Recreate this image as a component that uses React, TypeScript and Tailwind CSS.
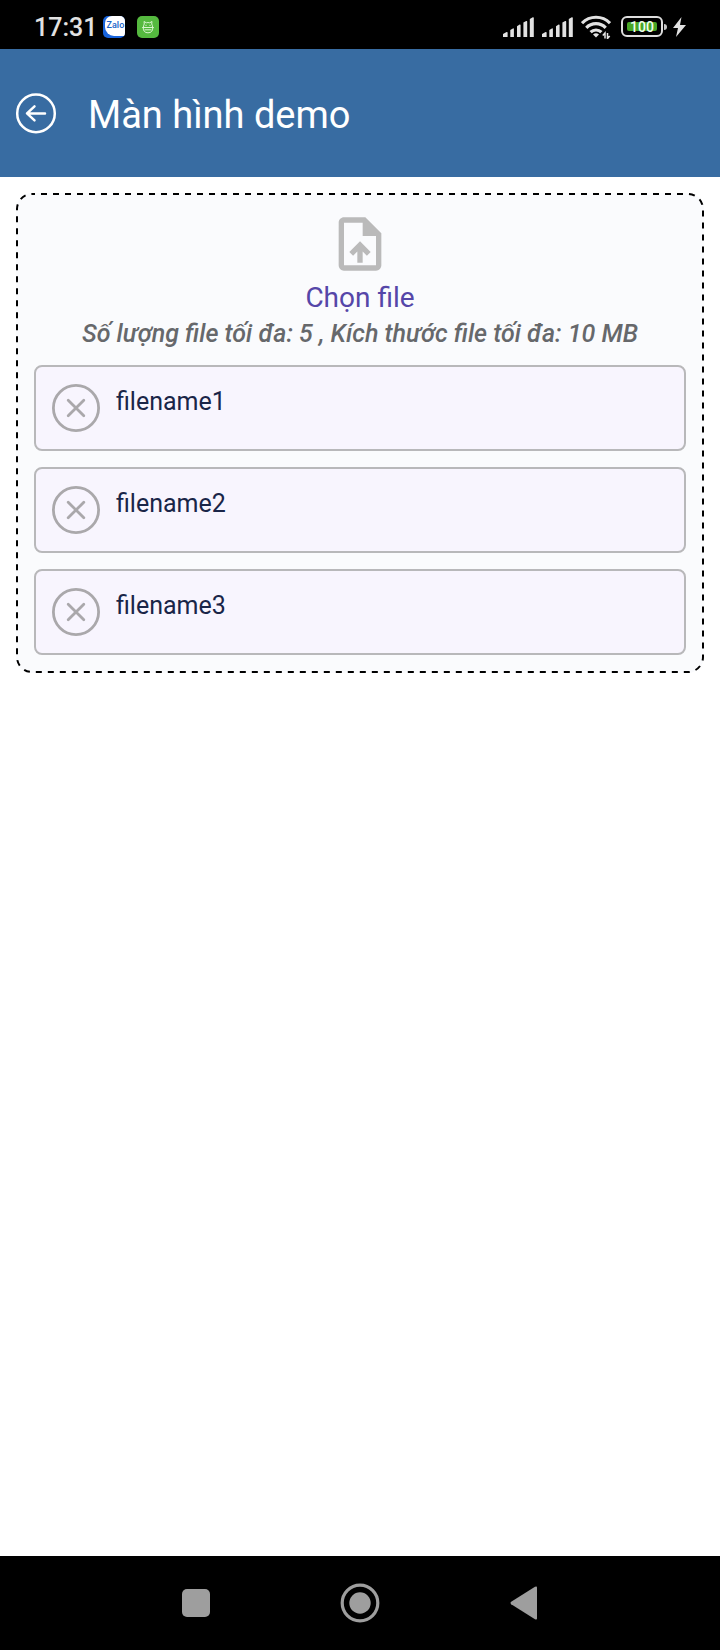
import React from "react";

const files = ["filename1", "filename2", "filename3"];

function SignalIcon() {
  return (
    <svg viewBox="0 0 31 20" className="h-5 w-[31px]" fill="#e2e2e2" aria-hidden="true">
      <path d="M0 20v-3l3.6-2q1-.3 1 .7V20z" />
      <path d="M7.300 20v-7l2.600-1.600q1-.3 1 .7V20z" />
      <path d="M14 20V9.200l2.600-1.600q1-.3 1 .7V20z" />
      <path d="M20.400 20V5.600l2.800-1.600q1-.3 1 .7V20z" />
      <path d="M26.800 20V2l3-1.700q1-.3 1 .7V20z" />
    </svg>
  );
}

function WifiIcon() {
  return (
    <svg viewBox="0 0 30 24" className="h-6 w-[30px]" fill="none" stroke="#e2e2e2" strokeWidth="3.200" aria-hidden="true">
      <path d="M1 8.200a19.500 19.500 0 0 1 28 0" />
      <path d="M5.300 12.800a13.400 13.400 0 0 1 19.400 0" />
      <path d="M9.600 17.200a7.700 7.700 0 0 1 10.800 0" />
      <path d="M15 22.500l-3-3q3-2.600 6 0z" fill="#e2e2e2" stroke="none" />
      <path d="M24 23.500v-5.500l-2.200 2.500M26.500 18v5.500l2.200-2.500" strokeWidth="1.500" />
    </svg>
  );
}

function StatusBar() {
  return (
    <div className="flex h-[49px] shrink-0 items-center justify-between bg-black px-[34px] pt-1">
      <div className="flex items-center">
        <span className="pt-0.5 text-[25px] leading-7 font-medium text-[#e2e2e2]">17:31</span>
        <span className="ml-1.5 flex h-[22px] w-[22px] overflow-hidden rounded-[5px] bg-[#1763dc]">
          <span className="ml-0.5 flex h-5 w-5 items-center justify-center rounded-tl-[7px] rounded-bl-[9px] bg-white text-[9px] leading-none font-medium text-[#1763c8]">
            Zalo
          </span>
        </span>
        <span className="ml-3 flex h-[22px] w-[22px] items-center justify-center rounded-[5px] bg-[#55b93f]">
          <svg viewBox="0 0 14 14" className="h-3.5 w-3.5" fill="none" stroke="#d9f5cf" strokeWidth="1" strokeLinejoin="round" aria-hidden="true">
            <path d="M2.500 7Q2.500 5 3.300 4L3 1.500l2.300 1.300q1.700-.5 3.400 0L11 1.500 10.700 4q.8 1 .8 3" />
            <path d="M1.200 7.500h11.600M2.200 7.500q0 5.300 4.800 5.300t4.800-5.300M3.500 9.800h7" />
            <path d="M5 4.800v1.200M9 4.800v1.200" />
          </svg>
        </span>
      </div>
      <div className="flex items-center gap-2">
        <SignalIcon />
        <SignalIcon />
        <WifiIcon />
        <span className="ml-0.5 flex items-center">
          <span className="flex h-[21px] w-[42px] rounded-[6px] border-2 border-[#dedede] p-1">
            <span className="flex flex-1 items-center justify-center rounded-[2px] bg-[#48a626] text-sm leading-none font-medium text-[#f2fff0]">
              100
            </span>
          </span>
          <span className="ml-px h-1.5 w-[3px] rounded-r-sm bg-[#c4c4c4]" />
        </span>
        <svg viewBox="0 0 13 20" className="-ml-0.5 h-5 w-[13px]" fill="#e2e2e2" aria-hidden="true">
          <path d="M8.500 0 0 11h5L3 20 13 8H7z" />
        </svg>
      </div>
    </div>
  );
}

function Header() {
  return (
    <header className="flex h-32 shrink-0 items-center gap-8 bg-[#386ca2] px-4">
      <button type="button" aria-label="Quay lại">
        <svg viewBox="0 0 40 40" className="h-10 w-10 overflow-visible" fill="none" stroke="white" strokeWidth="2.500" strokeLinecap="round" strokeLinejoin="round">
          <circle cx="20" cy="20.400" r="18.800" />
          <path d="M29 20.400H11.500M18.500 13.400l-7.500 7 7.500 7" />
        </svg>
      </button>
      <h1 className="pt-1 text-[38px] leading-11 text-white">Màn hình demo</h1>
    </header>
  );
}

function FileRow({ name }: { name: string }) {
  return (
    <li className="flex h-[86px] items-center gap-4 rounded-lg border-2 border-[#b8b8ba] bg-[#f8f5fe] p-4">
      <button type="button" aria-label={`Xóa ${name}`}>
        <svg viewBox="0 0 48 48" className="h-12 w-12" fill="none" stroke="#aaa8ab" strokeLinecap="round">
          <circle cx="24" cy="24" r="22.600" strokeWidth="2.800" />
          <path d="M16.200 16.200l15.600 15.600M31.800 16.200L16.200 31.800" strokeWidth="2.800" />
        </svg>
      </button>
      <span className="self-start pt-[3px] text-[25px] leading-8 text-[#1a2548]">{name}</span>
    </li>
  );
}

function NavBar() {
  return (
    <nav className="flex h-[94px] shrink-0 items-center justify-center bg-black">
      <button type="button" aria-label="Ứng dụng gần đây" className="flex w-41 justify-center">
        <span className="h-7 w-7 rounded-[5px] bg-[#9e9e9e]" />
      </button>
      <button type="button" aria-label="Màn hình chính" className="flex w-41 justify-center">
        <svg viewBox="0 0 40 40" className="h-10 w-10">
          <circle cx="20" cy="20" r="17.800" fill="none" stroke="#9e9e9e" strokeWidth="3.200" />
          <circle cx="20" cy="20" r="10.700" fill="#9e9e9e" />
        </svg>
      </button>
      <button type="button" aria-label="Trở về" className="flex w-41 justify-center">
        <svg viewBox="0 0 28 34" className="h-[34px] w-7" fill="#9e9e9e">
          <path d="M1.200 15.800Q-.2 17 1.200 18.200L25 33.200q2 1 2-.8V1.600q0-1.800-2-.8z" />
        </svg>
      </button>
    </nav>
  );
}

export default function App() {
  return (
    <div className="flex min-h-screen flex-col bg-white font-[Roboto,'Noto_Sans',sans-serif]">
      <StatusBar />
      <Header />
      <main className="flex-1 p-4">
        <section className="relative rounded-2xl bg-[#fafbfd] p-[18px]">
          <svg
            className="pointer-events-none absolute inset-px h-[calc(100%-2px)] w-[calc(100%-2px)] overflow-visible"
            fill="none"
            stroke="black"
            strokeWidth="2"
            strokeDasharray="6 6"
            strokeDashoffset="3"
            aria-hidden="true"
          >
            <rect width="100%" height="100%" rx="15" />
          </svg>
          <button type="button" className="flex w-full flex-col items-center pt-px">
            <svg viewBox="0 0 24 24" className="h-16 w-16" fill="#bababa" aria-hidden="true">
              <path d="M14 2H6c-1.100 0-1.990.9-1.990 2L4 20c0 1.100.89 2 1.990 2H18c1.100 0 2-.9 2-2V8l-6-6zm4 18H6V4h7v5h5v11zM8 15.010l1.410 1.410L11 14.840V19h2v-4.160l1.590 1.590L16 15.010 12.010 11z" />
            </svg>
            <span className="mt-1.5 text-[28px] leading-8 text-[#5546a8]">Chọn file</span>
          </button>
          <p className="mt-1 mb-[15px] text-center text-[25px] leading-8 font-medium text-[#66686b] italic">
            Số lượng file tối đa: 5 , Kích thước file tối đa: 10 MB
          </p>
          <ul className="flex flex-col gap-4">
            {files.map((name) => (
              <FileRow key={name} name={name} />
            ))}
          </ul>
        </section>
      </main>
      <NavBar />
    </div>
  );
}
